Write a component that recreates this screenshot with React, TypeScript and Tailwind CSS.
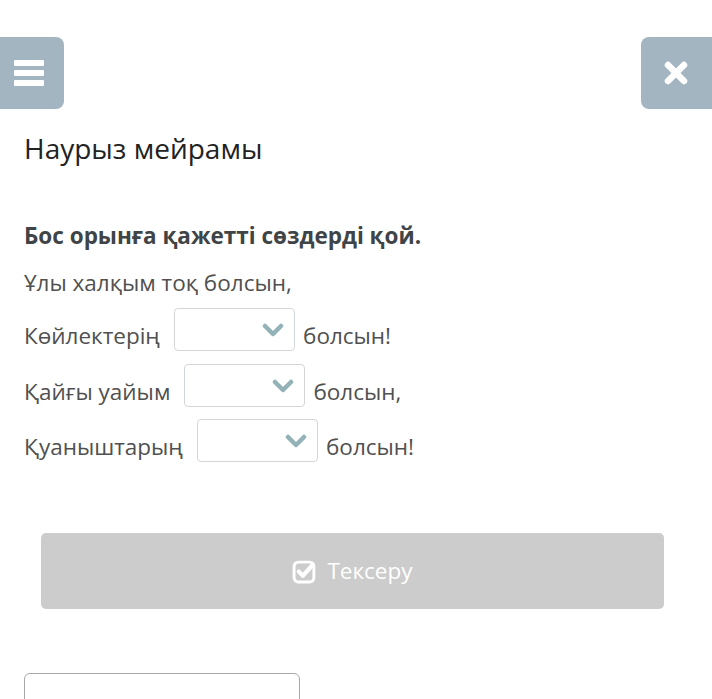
import React from "react";

function Chevron() {
  return (
    <svg width="22" height="14" viewBox="0 0 22 14" className="block">
      <polyline points="3,3 11,11 19,3" fill="none" stroke="#93b2b8" strokeWidth="4.5" strokeLinecap="round" strokeLinejoin="round" />
    </svg>
  );
}

function Select({ ml }: { ml: string }) {
  return (
    <div className={`${ml} mr-[8px] w-[121px] h-[43px] shrink-0 rounded-[4px] border border-[#d3d6d8] bg-white flex items-center justify-end pr-[10px]`}>
      <Chevron />
    </div>
  );
}

export default function App() {
  return (
    <div className="w-[712px] h-[699px] overflow-hidden bg-white relative" style={{ fontFamily: '"Open Sans", "Noto Sans", sans-serif' }}>
      <div className="pt-[37px] flex justify-between">
        <div className="w-[64px] h-[72px] bg-[#a3b5c1] rounded-r-[8px] flex flex-col items-center justify-center gap-[4px] pr-[6px]">
          <div className="w-[30px] h-[6px] bg-white rounded-[1px]" />
          <div className="w-[30px] h-[6px] bg-white rounded-[1px]" />
          <div className="w-[30px] h-[6px] bg-white rounded-[1px]" />
        </div>
        <div className="w-[71px] h-[72px] bg-[#a3b5c1] rounded-l-[8px] flex items-center justify-center pr-[1px]">
          <svg width="26" height="24" viewBox="0 0 26 24">
            <line x1="5" y1="4" x2="21" y2="20" stroke="white" strokeWidth="6.5" strokeLinecap="round" />
            <line x1="21" y1="4" x2="5" y2="20" stroke="white" strokeWidth="6.5" strokeLinecap="round" />
          </svg>
        </div>
      </div>

      <div className="pl-[24px]">
        <div className="mt-[20px] text-[28px] leading-[38px] text-[#222222]">Наурыз мейрамы</div>
        <div className="mt-[54px] text-[22.5px] leading-[30px] font-bold text-[#3f4447]">Бос орынға қажетті сөздерді қой.</div>
        <div className="mt-[17px] text-[22.5px] leading-[30px] text-[#505050]">Ұлы халқым тоқ болсын,</div>

        <div className="mt-[10px] flex items-end text-[22.5px] leading-[30px] text-[#505050]">
          <span>Көйлектерің</span>
          <Select ml="ml-[14px]" />
          <span>болсын!</span>
        </div>
        <div className="mt-[13px] flex items-end text-[22.5px] leading-[30px] text-[#505050]">
          <span>Қайғы уайым</span>
          <Select ml="ml-[14px]" />
          <span>болсын,</span>
        </div>
        <div className="mt-[12px] flex items-end text-[22.5px] leading-[30px] text-[#505050]">
          <span>Қуаныштарың</span>
          <Select ml="ml-[14px]" />
          <span>болсын!</span>
        </div>
      </div>

      <div className="mt-[71px] ml-[41px] w-[623px] h-[76px] rounded-[5px] bg-[#cccccc] flex items-center justify-center gap-[10px] text-white text-[22.5px]">
        <svg width="25" height="25" viewBox="0 0 24 24">
          <rect x="2" y="3" width="19" height="19" rx="4" fill="none" stroke="white" strokeWidth="2.8" />
          <polyline points="6.5,12 10.5,16 20,5.5" fill="none" stroke="white" strokeWidth="4" strokeLinecap="round" strokeLinejoin="round" />
        </svg>
        <span>Тексеру</span>
      </div>

      <div className="mt-[64px] ml-[24px] w-[276px] h-[60px] rounded-[6px] border border-[#a8a8a8]" />
    </div>
  );
}
